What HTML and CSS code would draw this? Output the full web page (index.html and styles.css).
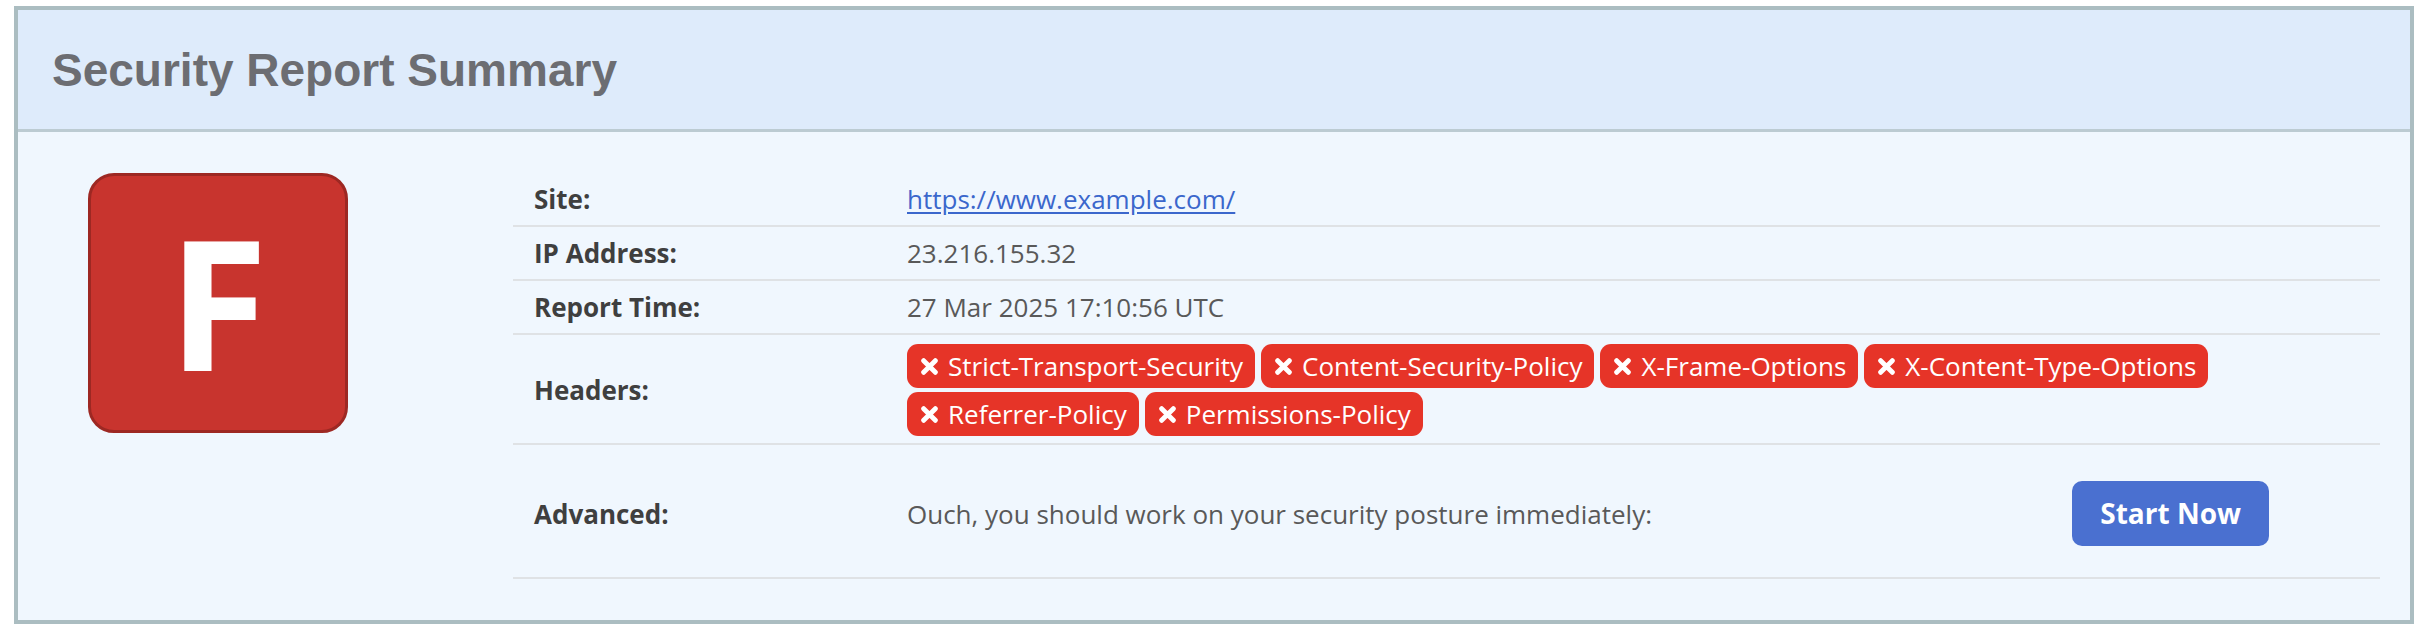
FILE: index.html
```html
<!DOCTYPE html>
<html lang="en">
<head>
<meta charset="utf-8">
<title>Security Report Summary</title>
<link rel="stylesheet" href="styles.css">
</head>
<body>
<section class="card">
  <header class="card-header">
    <h1 class="card-title">Security Report Summary</h1>
  </header>
  <div class="card-body">
    <div class="grade">F</div>
    <div class="summary">
      <div class="row">
        <div class="label">Site:</div>
        <div class="value"><a class="site-link" href="#">https://www.example.com/</a></div>
      </div>
      <div class="row">
        <div class="label">IP Address:</div>
        <div class="value">23.216.155.32</div>
      </div>
      <div class="row">
        <div class="label">Report Time:</div>
        <div class="value">27 Mar 2025 17:10:56 UTC</div>
      </div>
      <div class="row row-headers">
        <div class="label">Headers:</div>
        <div class="value badges">
          <span class="badge"><svg class="badge-icon" viewBox="0 0 16 16"><path d="M2.5 2.5L13.5 13.5M13.5 2.5L2.5 13.5"/></svg>Strict-Transport-Security</span>
          <span class="badge"><svg class="badge-icon" viewBox="0 0 16 16"><path d="M2.5 2.5L13.5 13.5M13.5 2.5L2.5 13.5"/></svg>Content-Security-Policy</span>
          <span class="badge"><svg class="badge-icon" viewBox="0 0 16 16"><path d="M2.5 2.5L13.5 13.5M13.5 2.5L2.5 13.5"/></svg>X-Frame-Options</span>
          <span class="badge"><svg class="badge-icon" viewBox="0 0 16 16"><path d="M2.5 2.5L13.5 13.5M13.5 2.5L2.5 13.5"/></svg>X-Content-Type-Options</span>
          <span class="badge"><svg class="badge-icon" viewBox="0 0 16 16"><path d="M2.5 2.5L13.5 13.5M13.5 2.5L2.5 13.5"/></svg>Referrer-Policy</span>
          <span class="badge"><svg class="badge-icon" viewBox="0 0 16 16"><path d="M2.5 2.5L13.5 13.5M13.5 2.5L2.5 13.5"/></svg>Permissions-Policy</span>
        </div>
      </div>
      <div class="row row-advanced">
        <div class="label">Advanced:</div>
        <div class="value advanced">
          <span>Ouch, you should work on your security posture immediately:</span>
          <a class="btn" href="#">Start Now</a>
        </div>
      </div>
    </div>
  </div>
</section>
</body>
</html>
```
FILE: styles.css
```css
html, body {
  margin: 0;
  padding: 0;
  background: #ffffff;
}

body {
  font-family: "Open Sans", "Noto Sans", sans-serif;
  color: #595959;
}

.card {
  margin: 6px 18px 0 14px;
  border: 4px solid #abbdc1;
  background: #f0f7fe;
}

.card-header {
  height: 122px;
  background: #deebfb;
  border-bottom: 3px solid #bccbd2;
  display: flex;
  align-items: center;
  padding: 0 0 0 34px;
  box-sizing: border-box;
}

.card-title {
  margin: 0;
  font-family: "Liberation Sans", Arial, sans-serif;
  font-weight: 700;
  font-size: 46px;
  color: #6c6d72;
}

.card-body {
  display: grid;
  grid-template-columns: 260px 1fr;
  column-gap: 165px;
  align-items: start;
  padding: 41px 30px 41px 70px;
}

.grade {
  width: 260px;
  height: 260px;
  box-sizing: border-box;
  border: 3px solid #9d2823;
  border-radius: 26px;
  background: #c8342e;
  color: #ffffff;
  font-family: "Open Sans", sans-serif;
  font-weight: 700;
  font-size: 182px;
  line-height: 1;
  display: flex;
  align-items: center;
  justify-content: center;
  padding-bottom: 6px;
}

.row {
  display: grid;
  grid-template-columns: 373px 1fr;
  align-items: center;
  padding: 7px 21px;
  border-bottom: 2px solid #dfe2e5;
  font-size: 26px;
  line-height: 38px;
}

.label {
  font-weight: 700;
  color: #3f3f3f;
}

.value {
  color: #595959;
}

.site-link {
  color: #3b67cc;
  text-decoration: underline;
  text-underline-offset: 3px;
}

.row-headers {
  padding: 9px 21px 7px;
}

.badges {
  display: flex;
  flex-wrap: wrap;
  gap: 4px 6px;
}

.badge {
  display: inline-flex;
  align-items: center;
  height: 44px;
  padding: 0 12px 0 14px;
  border-radius: 11px;
  background: #e63428;
  color: #ffffff;
  font-weight: 500;
  font-size: 26px;
  line-height: 44px;
}

.badge-icon {
  width: 17px;
  height: 17px;
  margin-right: 10px;
  fill: none;
  stroke: #ffffff;
  stroke-width: 4.6;
  stroke-linecap: round;
}

.row-advanced {
  padding: 36px 21px 31px;
}

.advanced {
  display: flex;
  align-items: center;
  justify-content: space-between;
}

.btn {
  display: inline-block;
  height: 65px;
  line-height: 65px;
  padding: 0 28px;
  margin-right: 90px;
  border-radius: 10px;
  background: #4a70d0;
  color: #ffffff;
  font-weight: 700;
  font-size: 28px;
  text-decoration: none;
}
```
